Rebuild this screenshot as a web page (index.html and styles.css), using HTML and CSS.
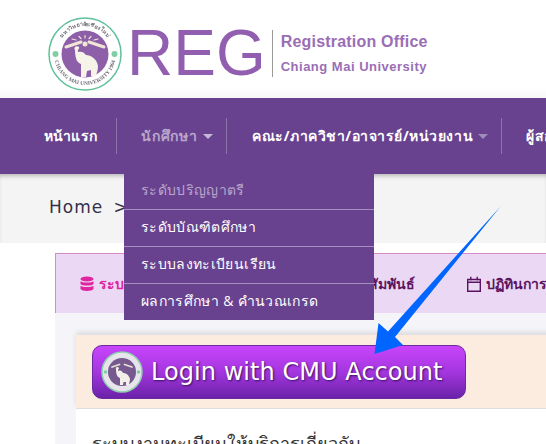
FILE: index.html
```html
<!DOCTYPE html>
<html lang="en">
<head>
    <meta charset="UTF-8">
    <meta name="viewport" content="width=device-width, initial-scale=1.0">
    <title>REG Chiang Mai University</title>
    <link rel="stylesheet" href="styles.css">
</head>
<body>
    <!-- Logo header -->
    <header class="top">
        <svg class="seal" viewBox="0 0 74 74">
            <defs>
                <path id="ringTop" d="M9 37A28 28 0 0 1 65 37"/>
                <path id="ringBottom" d="M6 37A31 31 0 0 0 68 37"/>
            </defs>
            <circle cx="37" cy="37" r="36" fill="#fff" stroke="#5fc09a" stroke-width="1.500"/>
            <circle cx="37" cy="37" r="23.500" fill="#8d5fa8"/>
            <text class="seal-text"><textPath href="#ringTop" startOffset="50%" text-anchor="middle">มหาวิทยาลัยเชียงใหม่</textPath></text>
            <text class="seal-text"><textPath href="#ringBottom" startOffset="50%" text-anchor="middle">CHIANG MAI UNIVERSITY 1964</textPath></text>
            <circle cx="7.500" cy="37" r="3" fill="#7fcfa5"/>
            <circle cx="66.500" cy="37" r="3" fill="#7fcfa5"/>
            <path d="M18 30L33 25M56 30L41 25" stroke="#efe6d6" stroke-width="3" stroke-linecap="round"/>
            <path d="M24 22L28 23M31 19.500L33 21.500M37 18.500V21M43 19.500L41 21.500M50 22L46 23" stroke="#efe6d6" stroke-width="1.200" stroke-linecap="round"/>
            <circle cx="37" cy="27" r="2.500" fill="#efe6d6"/>
            <path d="M27 33C25 30 29 28 31 30C32 32 29 32 30 35C33 34 36 35 38 38C43 38 49 42 50 49C50 53 49 55 48 59L43 59L43 53L39 54L38 60L33 60L33 47C30 46 27 43 27 33Z" fill="#f6f3e8"/>
        </svg>
        <div class="brand">REG</div>
        <div class="brand-sub">
            <div class="brand-line1">Registration Office</div>
            <div class="brand-line2">Chiang Mai University</div>
        </div>
    </header>

    <!-- Main menu -->
    <nav class="menu">
        <div class="menu-item item-home">หน้าแรก</div>
        <div class="menu-item item-student muted">นักศึกษา <span class="caret"></span>
            <div class="dropdown">
                <div class="drop-row muted">ระดับปริญญาตรี</div>
                <div class="drop-row">ระดับบัณฑิตศึกษา</div>
                <div class="drop-row">ระบบลงทะเบียนเรียน</div>
                <div class="drop-row">ผลการศึกษา &amp; คำนวณเกรด</div>
            </div>
        </div>
        <div class="menu-item item-faculty">คณะ/ภาควิชา/อาจารย์/หน่วยงาน <span class="caret dim"></span></div>
        <div class="menu-item item-last">ผู้สอน</div>
    </nav>

    <div class="crumb">Home &gt;</div>

    <main class="content">
        <div class="tabs">
            <div class="tab tab-reg">
                <svg class="tab-icon" viewBox="0 0 14 16"><g fill="#e0259f"><ellipse cx="7" cy="3" rx="6.500" ry="2.600"/><path d="M.5 5.200C2 7 12 7 13.500 5.200V8C12 10 2 10 .5 8Z"/><path d="M.5 9.700C2 11.500 12 11.500 13.500 9.700V13C12 15.500 2 15.500 .5 13Z"/></g></svg>
                <span>ระบบงานทะเบียน</span>
            </div>
            <div class="tab tab-news">ประชาสัมพันธ์</div>
            <div class="tab tab-cal">
                <svg class="tab-icon" viewBox="0 0 14 16"><path d="M.7 3.500H13.300V15.300H.7ZM.7 6.200H13.300M3.800 .7V4.500M10.200 .7V4.500" fill="none" stroke="#5d1460" stroke-width="1.400"/></svg>
                <span>ปฏิทินการศึกษา</span>
            </div>
        </div>

        <section class="panel">
            <div class="panel-head">
                <div class="login-btn">
                    <svg class="login-seal" viewBox="0 0 42 42">
                        <circle cx="21" cy="21" r="20" fill="#e8e4ec" stroke="#8fcfb0" stroke-width="1.500"/>
                        <circle cx="21" cy="21" r="14" fill="#75598f"/>
                        <circle cx="4.500" cy="21" r="1.800" fill="#7fcfa5"/>
                        <circle cx="37.500" cy="21" r="1.800" fill="#7fcfa5"/>
                        <path d="M11 16L18.500 13.500M31 16L23.500 13.500" stroke="#e8e0d0" stroke-width="1.800" stroke-linecap="round"/>
                        <path d="M15 18C14 16 17 15 18 17C18 18 17 18 17 20C20 19 21 20 22 22C25 22 28 24 29 28C29 30 28 32 28 34H25V31H22.500L22 34H19V27C16 26 15 23 15 18Z" fill="#f2f0e8"/>
                    </svg>
                    <span class="login-text">Login with CMU Account</span>
                </div>
            </div>
            <div class="panel-body">ระบบงานทะเบียนให้บริการเกี่ยวกับ</div>
        </section>
    </main>

    <!-- Annotation arrow drawn over the page -->
    <svg class="arrow" viewBox="0 0 546 444">
        <path d="M500.500 206.500 L395 337 L403 345 L374.500 354 L378.500 323 L388 331.500 Z" fill="#0066ff"/>
    </svg>
</body>
</html>
```

FILE: styles.css
```css
body {
    margin: 0;
    width: 546px;
    height: 444px;
    overflow: hidden;
    position: relative;
    background: #fff;
    font-family: "Open Sans", "Noto Sans", "DejaVu Sans", sans-serif;
}

/* Logo header */
.top {
    height: 98px;
    display: flex;
    align-items: center;
    padding-left: 48px;
    box-sizing: border-box;
    background: linear-gradient(#fff 90%, #f6f6f6);
}
.seal {
    width: 74px;
    height: 74px;
    flex: none;
    margin-top: 10px;
    filter: blur(0.4px);
}
.seal-text {
    font-family: "Liberation Serif", serif;
    font-size: 5.500px;
    font-weight: bold;
    fill: #75707a;
}
.brand {
    font-family: "Liberation Sans", Arial, sans-serif;
    font-size: 64px;
    line-height: 64px;
    color: #925fb0;
    margin-left: 5px;
    margin-top: 8px;
}
.brand-sub {
    margin-left: 6px;
    padding: 1px 0 0 8px;
    border-left: 1px solid #999;
    height: 47px;
    box-sizing: border-box;
    margin-top: 8px;
    font-family: "Liberation Sans", Arial, sans-serif;
    font-weight: bold;
    color: #9a6eb5;
}
.brand-line1 {
    font-size: 16px;
    line-height: 22px;
    letter-spacing: 0.2px;
}
.brand-line2 {
    font-size: 13px;
    line-height: 24px;
    margin-top: 2px;
    letter-spacing: 0.5px;
}

/* Main menu */
.menu {
    height: 76px;
    background: #68428f;
    display: flex;
    align-items: center;
    padding-left: 44px;
    color: #fff;
    font-weight: bold;
    font-size: 14px;
    letter-spacing: 0.55px;
    position: relative;
    z-index: 2;
}
.menu-item {
    height: 36px;
    line-height: 36px;
    white-space: nowrap;
    position: relative;
    flex: none;
    box-sizing: border-box;
}
.item-home {
    width: 73px;
    letter-spacing: 0.15px;
    border-right: 1px solid #8f74ab;
}
.item-student {
    width: 110px;
    padding-left: 24px;
    letter-spacing: 0.8px;
    border-right: 1px solid #8f74ab;
}
.item-faculty {
    width: 275px;
    padding-left: 25px;
    border-right: 1px solid #8f74ab;
}
.item-last {
    padding-left: 24px;
}
.muted {
    color: #b8a6cc;
}
.caret {
    display: inline-block;
    width: 0;
    height: 0;
    margin-left: 1px;
    vertical-align: 2px;
    border-left: 5px solid transparent;
    border-right: 5px solid transparent;
    border-top: 5px solid #c6b8d6;
}
.caret.dim {
    border-top-color: #a08cb8;
}

.dropdown {
    position: absolute;
    left: 7px;
    top: 55px;
    width: 250px;
    background: #68428f;
    color: #fff;
    font-size: 14px;
    font-weight: normal;
    letter-spacing: 0.35px;
}
.drop-row {
    height: 37px;
    line-height: 34px;
    padding-left: 17px;
    border-bottom: 1px solid #a78fc0;
    box-sizing: border-box;
}
.drop-row.muted {
    color: #b8a6cc;
}
.drop-row:last-child {
    height: 36px;
    border-bottom: none;
}

/* Breadcrumb */
.crumb {
    height: 69px;
    background: #f4f4f4;
    box-shadow: inset 0 4px 4px -2px rgba(0, 0, 0, 0.25);
    padding: 23px 0 0 49px;
    box-sizing: border-box;
    font-family: "DejaVu Sans", sans-serif;
    font-size: 17px;
    letter-spacing: 1px;
    word-spacing: 4px;
    color: #33304a;
}

/* Tabs and panel */
.content {
    padding: 10px 0 0 55px;
    background: #fff;
}
.tabs {
    height: 60px;
    width: 540px;
    background: #ead8f5;
    border-left: 1px solid #d68bc9;
    border-top: 1px solid #d68bc9;
    box-sizing: border-box;
    display: flex;
    align-items: center;
    font-size: 14px;
    font-weight: bold;
}
.tab {
    display: flex;
    align-items: center;
    gap: 5px;
    white-space: nowrap;
    flex: none;
}
.tab-reg {
    width: 270px;
    padding-left: 24px;
    box-sizing: border-box;
    color: #e0259f;
}
.tab-news {
    width: 141px;
    color: #5d1460;
}
.tab-cal {
    color: #5d1460;
}
.tab-icon {
    width: 14px;
    height: 16px;
    flex: none;
}

.panel {
    padding: 22px 0 0 21px;
    background: #f5f5f9;
    height: 131px;
    box-sizing: border-box;
}
.panel-head {
    height: 74px;
    width: 480px;
    background: #fcecdf;
    border-bottom: 1px solid #dedede;
    box-sizing: border-box;
    padding: 10px 0 0 16px;
    box-shadow: 0 -3px 5px rgba(0, 0, 0, 0.1);
}
.login-btn {
    width: 374px;
    height: 54px;
    box-sizing: border-box;
    border: 1px solid #6a2aa0;
    border-radius: 10px;
    background: linear-gradient(#c845fc, #a436df 50%, #6a22a8);
    display: flex;
    align-items: center;
    padding-left: 8px;
    gap: 8px;
}
.login-seal {
    width: 42px;
    height: 42px;
    flex: none;
}
.login-text {
    font-family: "DejaVu Sans", sans-serif;
    font-size: 24px;
    letter-spacing: 0.05px;
    color: #fff;
    white-space: nowrap;
    text-shadow: 1px 1px 2px #3b1060;
}
.panel-body {
    width: 480px;
    background: #fff;
    padding: 20px 0 0 16px;
    height: 60px;
    box-sizing: border-box;
    font-size: 18px;
    color: #333;
    white-space: nowrap;
}

.arrow {
    position: absolute;
    left: 0;
    top: 0;
    width: 546px;
    height: 444px;
    z-index: 3;
}
```
